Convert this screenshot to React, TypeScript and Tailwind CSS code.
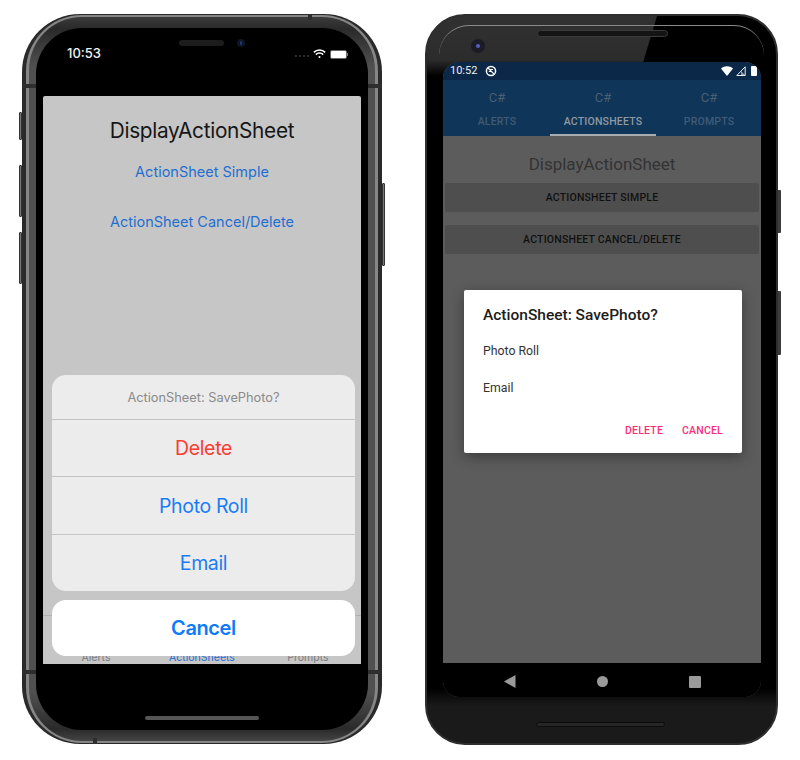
export default function App() {
  return (
    <div className="w-[800px] h-[760px] bg-white flex items-start pt-[14px] pl-[22px] gap-[43px] overflow-hidden">
      <IPhone />
      <Pixel />
    </div>
  );
}

const ios = "font-['Inter','Liberation_Sans',sans-serif]";
const rob = "font-['Roboto','Liberation_Sans',sans-serif]";

function SideBtn({ cls }: { cls: string }) {
  return <div className={"absolute w-[3px] bg-[#777] border border-[#333] rounded-[1px] " + cls} />;
}

function IPhone() {
  return (
    <div className="relative w-[360px] h-[730px] shrink-0">
      <SideBtn cls="-left-[3px] top-[98px] h-[28px]" />
      <SideBtn cls="-left-[3px] top-[151px] h-[52px]" />
      <SideBtn cls="-left-[3px] top-[218px] h-[52px]" />
      <SideBtn cls="-right-[3px] top-[169px] h-[83px]" />
      <div className="h-full rounded-[58px] bg-[#2a2a2a] px-[4px] py-[1px]">
        <div className="h-full rounded-[56px] bg-[#868686] px-[3px] py-[2px]">
          <div className="h-full rounded-[53px] bg-[linear-gradient(180deg,#3a3a3a_0,#2a2a2a_12px,#505050_50px,#505050_675px,#2a2a2a_712px,#444_100%)] px-[7px] py-[11px]">
            <div className="relative h-full rounded-[46px] bg-black px-[7px] flex flex-col overflow-hidden">
              <div className="absolute left-[143px] top-[12px] w-[45px] h-[6px] rounded-full bg-[#1c1c1c]" />
              <div className="absolute left-[201px] top-[11px] w-[8px] h-[8px] rounded-full bg-[#0c1626] flex items-center justify-center">
                <div className="w-[2px] h-[4px] rounded-full bg-[#1d3a66]" />
              </div>
              <div className="h-[68px] flex items-start justify-between pl-[24px] pr-[13px] pt-[17px] shrink-0">
                <span className={ios + " text-[13px] leading-[16px] font-medium text-[#f2f2f2]"}>10:53</span>
                <div className="flex items-center gap-[4px] pt-[4px]">
                  <div className="flex gap-[2px] mt-[3px]">
                    <i className="w-[2px] h-[2px] rounded-full bg-[#3c3c3c]" />
                    <i className="w-[2px] h-[2px] rounded-full bg-[#3c3c3c]" />
                    <i className="w-[2px] h-[2px] rounded-full bg-[#3c3c3c]" />
                    <i className="w-[2px] h-[2px] rounded-full bg-[#3c3c3c]" />
                  </div>
                  <svg width="13" height="10" viewBox="0 0 13 10" fill="none" stroke="#fff" strokeWidth="1.5">
                    <path d="M.8 3.4a8 8 0 0 1 11.4 0" />
                    <path d="M2.8 5.6a5.2 5.2 0 0 1 7.4 0" />
                    <circle cx="6.5" cy="8" r="1" fill="#fff" stroke="none" />
                  </svg>
                  <div className="flex items-center">
                    <div className="w-[17px] h-[9px] rounded-[2px] bg-white border border-[#666]" />
                    <div className="w-[1px] h-[3px] bg-[#777]" />
                  </div>
                </div>
              </div>
              <div className={"relative flex-1 bg-[#c6c6c6] rounded-t-[2px] overflow-hidden flex flex-col items-center " + ios}>
                <h1 className="mt-[22px] text-[20.8px] leading-[26px] text-[#161616] tracking-[-0.3px]">DisplayActionSheet</h1>
                <button className="mt-[19px] h-[18px] text-[14.5px] leading-[18px] text-[#1f6fd1]">ActionSheet Simple</button>
                <button className="mt-[32px] h-[18px] text-[14.5px] leading-[18px] text-[#1f6fd1]">ActionSheet Cancel/Delete</button>
                <div className="mt-auto w-full h-[49px] border-t border-[#b0b0b0] grid grid-cols-3 text-center items-end text-[10.5px] leading-[13px] text-[#7d7d7d]">
                  <span>Alerts</span>
                  <span className="text-[#1f6fd1]">ActionSheets</span>
                  <span>Prompts</span>
                </div>
                <div className="absolute left-[9px] w-[303px] bottom-[8px] flex flex-col gap-[9px]">
                  <div className="rounded-[14px] bg-[#ececec] flex flex-col overflow-hidden">
                    <div className="h-[44px] pt-[1px] flex items-center justify-center text-[12.8px] text-[#8a8a8a]">ActionSheet: SavePhoto?</div>
                    <SheetItem label="Delete" color="text-[#fb3b30]" h="h-[57px]" />
                    <SheetItem label="Photo Roll" color="text-[#1a7df5]" h="h-[58px]" />
                    <SheetItem label="Email" color="text-[#1a7df5]" h="h-[57px]" />
                  </div>
                  <div className="h-[56px] rounded-[14px] bg-white flex items-center justify-center text-[20px] tracking-[-0.4px] font-semibold text-[#0f7bfb]">Cancel</div>
                </div>
              </div>
              <div className="h-[66px] shrink-0 flex items-end justify-center pb-[10px]">
                <div className="w-[114px] h-[4px] rounded-full bg-[#555]" />
              </div>
            </div>
          </div>
        </div>
      </div>
      <div className="absolute left-0 top-[70px] w-[14px] h-[4px] bg-[#2e2e2e]" />
      <div className="absolute right-0 top-[70px] w-[14px] h-[4px] bg-[#2e2e2e]" />
      <div className="absolute left-0 bottom-[70px] w-[14px] h-[4px] bg-[#2e2e2e]" />
      <div className="absolute right-0 bottom-[70px] w-[14px] h-[4px] bg-[#2e2e2e]" />
      <div className="absolute left-[286px] top-0 w-[4px] h-[6px] bg-[#2e2e2e]" />
      <div className="absolute left-[71px] bottom-0 w-[4px] h-[6px] bg-[#2e2e2e]" />
    </div>
  );
}

function SheetItem({ label, color, h }: { label: string; color: string; h: string }) {
  return <div className={h + " pt-[2px] border-t border-[#c4c4c4] flex items-center justify-center text-[19.5px] tracking-[-0.35px] " + color}>{label}</div>;
}

function Pixel() {
  return (
    <div className="relative w-[353px] h-[731px] shrink-0">
      <div className="absolute -right-[3px] top-[176px] w-[3px] h-[43px] bg-[#3c3c3c] rounded-r-[1px]" />
      <div className="absolute -right-[3px] top-[277px] w-[3px] h-[64px] bg-[#3c3c3c] rounded-r-[1px]" />
      <div className="relative h-full rounded-[40px] border-2 border-[#2e2e2e] bg-[linear-gradient(180deg,#313131_0,#2c2c2c_44px,#000_60px,#000_672px,#1a1a1a_690px,#1a1a1a_100%)] overflow-hidden pl-[16px] pr-[15px] pt-[46px] pb-[46px]">
        <div className="absolute left-[212px] right-0 top-0 h-[60px] bg-black [clip-path:polygon(18px_0,100%_0,100%_100%,0_100%)]" />
        <div className="absolute left-[12px] right-[12px] top-[9px] h-[40px] rounded-t-[30px] border-t border-[#8a8a8a]" />
        <div className="absolute left-[110px] top-[14px] w-[131px] h-[7px] rounded-full bg-[#141414] border border-[#3a3a3a]" />
        <div className="absolute left-[44px] top-[23px] w-[14px] h-[14px] rounded-full bg-[#1c1c26] flex items-center justify-center">
          <div className="w-[4px] h-[4px] rounded-full bg-[#5560b8]" />
        </div>
        <div className="absolute left-[109px] bottom-[16px] w-[129px] h-[5px] rounded-full bg-[#262626] border border-[#0c0c0c]" />
        <div className={"relative h-full rounded-[16px] overflow-hidden flex flex-col bg-[#5c5c5c] " + rob}>
          <div className="h-[18px] shrink-0 bg-[#0b2849] flex items-center justify-between pl-[7px] pr-[4px] text-white">
            <div className="flex items-center gap-[8px]">
              <span className="text-[11px] leading-[14px] text-[#eee]">10:52</span>
              <svg width="12" height="12" viewBox="0 0 12 12" fill="none" stroke="#fff">
                <circle cx="6" cy="6" r="4.6" strokeWidth="1.5" />
                <path d="M3 3l6 6M3.8 6.5h3M5 4.5h3" strokeWidth="1.1" />
              </svg>
            </div>
            <div className="flex items-center gap-[3px]">
              <svg width="12" height="10" viewBox="0 0 12 10"><path d="M0 2.6C3.4-.6 8.6-.6 12 2.6L6 10z" fill="#fff" /></svg>
              <svg width="10" height="10" viewBox="0 0 10 10" fill="none" stroke="#eee"><path d="M9.2.8v8.7H.8z" /><path d="M9.5 9.5H5V5z" fill="#eee" stroke="none" opacity=".6" /></svg>
              <div className="ml-[2px] w-[6px] h-[10px] rounded-[1px] bg-white" />
            </div>
          </div>
          <div className="h-[56px] shrink-0 bg-[#0f3558] grid grid-cols-[106px_106px_106px] pl-[1px] text-center">
            <Tab label="ALERTS" />
            <Tab label="ACTIONSHEETS" active />
            <Tab label="PROMPTS" />
          </div>
          <div className="flex-1 flex flex-col items-center relative">
            <h2 className="mt-[16px] h-[24px] text-[17px] leading-[24px] text-[#333]">DisplayActionSheet</h2>
            <Btn label="ACTIONSHEET SIMPLE" cls="mt-[7px]" />
            <Btn label="ACTIONSHEET CANCEL/DELETE" cls="mt-[13px]" />
            <div className="absolute left-[21px] top-[154px] w-[278px] h-[163px] bg-white rounded-[2px] shadow-[0_4px_14px_rgba(0,0,0,0.35)] px-[19px] flex flex-col">
              <div className="mt-[14px] h-[22px] text-[15.5px] leading-[22px] font-medium text-[#1c1c1c]">ActionSheet: SavePhoto?</div>
              <div className="mt-[16px] h-[18px] text-[12.3px] leading-[18px] text-[#333]">Photo Roll</div>
              <div className="mt-[19px] h-[18px] text-[12.3px] leading-[18px] text-[#333]">Email</div>
              <div className="mt-[27px] flex justify-end gap-[19px] text-[10.5px] leading-[14px] font-medium text-[#ff2d78] tracking-[0.2px]">
                <span>DELETE</span>
                <span>CANCEL</span>
              </div>
            </div>
          </div>
          <div className="h-[34px] shrink-0 bg-black flex items-center justify-between pl-[61px] pr-[60px] pt-[3px]">
            <svg width="12" height="13" viewBox="0 0 12 13"><path d="M11.5 0v13L0 6.5z" fill="#9a9a9a" /></svg>
            <div className="w-[11px] h-[11px] rounded-full bg-[#9a9a9a]" />
            <div className="w-[12px] h-[12px] rounded-[1px] bg-[#9a9a9a]" />
          </div>
        </div>
      </div>
    </div>
  );
}

function Tab({ label, active }: { label: string; active?: boolean }) {
  return (
    <div className={"relative flex flex-col items-center " + (active ? "text-[#8f99a2]" : "text-[#3f5b76]")}>
      <span className="mt-[9px] h-[18px] text-[13px] leading-[18px] text-[#4a5f74]">C#</span>
      <span className="mt-[8px] text-[10.5px] leading-[14px] font-medium tracking-[0.2px]">{label}</span>
      {active && <div className="absolute bottom-0 inset-x-0 h-[2px] bg-[#a9adb2]" />}
    </div>
  );
}

function Btn({ label, cls }: { label: string; cls: string }) {
  return (
    <button className={"w-[314px] h-[29px] pt-[1px] rounded-[2px] bg-[#4e4e4e] flex items-center justify-center text-[10.5px] font-medium tracking-[0.2px] text-[#111] " + cls}>
      {label}
    </button>
  );
}
